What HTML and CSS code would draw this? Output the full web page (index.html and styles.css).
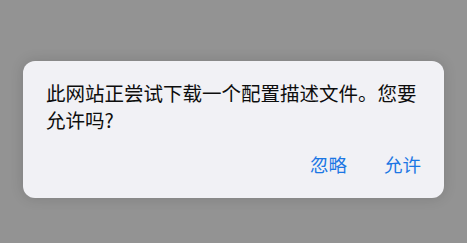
FILE: index.html
```html
<!DOCTYPE html>
<html lang="zh-CN">
<head>
<meta charset="utf-8">
<link rel="stylesheet" href="styles.css">
</head>
<body>
<div class="backdrop">
  <div class="alert">
    <p class="message">此网站正尝试下载一个配置描述文件。您要<br>允许吗?</p>
    <div class="actions">
      <span class="action">忽略</span>
      <span class="action">允许</span>
    </div>
  </div>
</div>
</body>
</html>
```
FILE: styles.css
```css
html, body {
  margin: 0;
  padding: 0;
  background: #939393;
}
.backdrop {
  width: 467px;
  height: 243px;
  padding: 61px 0 0 23px;
  box-sizing: border-box;
}
.alert {
  width: 421px;
  height: 137px;
  box-sizing: border-box;
  background: #f1f1f5;
  border-radius: 12px;
  box-shadow: 0 0 14px rgba(0, 0, 0, 0.14);
  padding: 18px 20px 0 23px;
  font-family: "Noto Sans CJK SC", sans-serif;
}
.message {
  margin: 0;
  font-size: 19.5px;
  line-height: 27px;
  white-space: nowrap;
  color: #0d0d0d;
}
.actions {
  display: flex;
  justify-content: flex-end;
  gap: 37px;
  margin-top: 18px;
  padding-right: 3px;
}
.action {
  font-size: 18.5px;
  line-height: 26px;
  color: #1c77e4;
}
```
